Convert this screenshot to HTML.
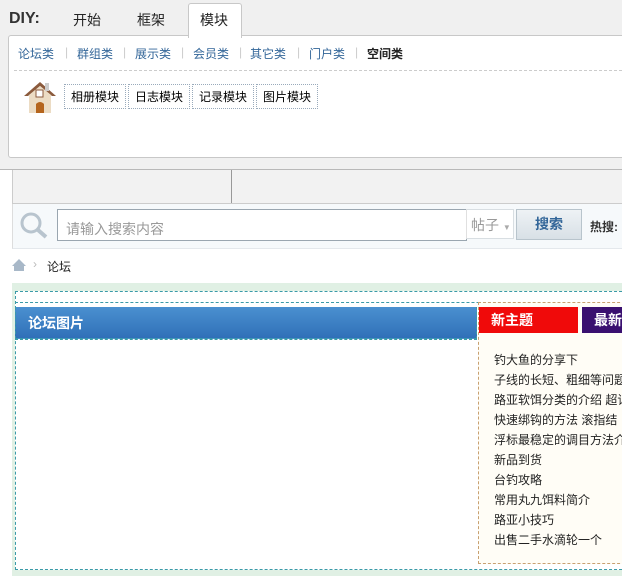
<!DOCTYPE html><html><head><meta charset="utf-8"><style>
body{margin:0;width:622px;height:580px;overflow:hidden;background:#fff;font-family:"Liberation Sans","Noto Sans CJK SC",sans-serif;font-size:12px;position:relative}
.a{position:absolute}
.c{position:absolute;top:45px;color:#336699}
.s{position:absolute;top:45px;color:#ccc}
.m{border:1px dotted #9ab;padding:3px 0;width:60px;text-align:center;display:inline-block}
</style></head><body>
<div class="a" style="left:0;top:0;width:622px;height:169px;background:#f0f0f0;border-bottom:1px solid #b8b8b8"></div>
<div class="a" style="left:9px;top:10px;font:bold 16px 'Liberation Sans',sans-serif;color:#333">DIY:</div>
<div class="a" style="left:73px;top:10px;font-size:14px;color:#222">开始</div>
<div class="a" style="left:137px;top:10px;font-size:14px;color:#222">框架</div>
<div class="a" style="left:188px;top:3px;width:52px;height:34px;background:#fff;border:1px solid #c8c8c8;border-bottom:none;border-radius:3px 3px 0 0;z-index:2"></div>
<div class="a" style="left:200px;top:10px;font-size:14px;color:#222;z-index:3">模块</div>
<div class="a" style="left:8px;top:35px;width:620px;height:121px;background:#fff;border:1px solid #c8c8c8;border-radius:3px"></div>
<span class="c" style="left:18px">论坛类</span><span class="s" style="left:65px">|</span>
<span class="c" style="left:77px">群组类</span><span class="s" style="left:123px">|</span>
<span class="c" style="left:135px">展示类</span><span class="s" style="left:181px">|</span>
<span class="c" style="left:193px">会员类</span><span class="s" style="left:239px">|</span>
<span class="c" style="left:250px">其它类</span><span class="s" style="left:297px">|</span>
<span class="c" style="left:309px">门户类</span><span class="s" style="left:355px">|</span>
<span class="c" style="left:367px;color:#222;font-weight:bold">空间类</span>
<div class="a" style="left:14px;top:70px;width:608px;border-top:1px dashed #ccc"></div>
<svg class="a" style="left:23px;top:80px" width="34" height="34" viewBox="0 0 34 34"><path d="M1 16 L17 2 L33 16 L29 16 L17 6 L5 16Z" fill="#8b5a3c"/><path d="M6 15 L17 6 L28 15 L28 33 L6 33Z" fill="#ecdcc4"/><rect x="22" y="3" width="4" height="8" fill="#ccc"/><rect x="13" y="10" width="7" height="7" fill="#fff" stroke="#8b5a3c"/><path d="M13 33 V24 Q17 20 21 24 V33Z" fill="#b5651d"/></svg>
<div class="a" style="left:64px;top:84px;display:flex;gap:2px">
<span class="m">相册模块</span><span class="m">日志模块</span><span class="m">记录模块</span><span class="m">图片模块</span></div>
<div class="a" style="left:12px;top:170px;width:610px;height:33px;background:#f2f2f2;border-bottom:1px solid #ccc;border-left:1px solid #ccc"></div>
<div class="a" style="left:231px;top:170px;height:33px;border-left:1px solid #999"></div>
<div class="a" style="left:12px;top:204px;width:610px;height:44px;background:#f6f9fb;border-bottom:1px solid #e4e8ec;border-left:1px solid #ddd"></div>
<svg class="a" style="left:18px;top:211px" width="32" height="28"><circle cx="13" cy="12" r="9" fill="none" stroke="#b8c4ce" stroke-width="3"/><path d="M20 19 L28 26" stroke="#b8c4ce" stroke-width="4"/></svg>
<div class="a" style="left:57px;top:209px;width:408px;height:30px;background:#fff;border:1px solid #9aa6b0"></div>
<div class="a" style="left:66px;top:219px;color:#999;font-size:14px">请输入搜索内容</div>
<div class="a" style="left:466px;top:209px;width:48px;height:30px;background:#fff;border:1px solid #d8dee2;border-left-color:#e0e0e0;color:#999;font-size:14px;line-height:30px;padding-left:4px;box-sizing:border-box">帖子 <span style="font-size:8px;color:#aaa">▼</span></div>
<div class="a" style="left:516px;top:209px;width:66px;height:31px;background:linear-gradient(#eef2f5,#d8e0e6);border:1px solid #b8c4cc;box-sizing:border-box;color:#336699;font-weight:bold;font-size:14px;text-align:center;line-height:29px">搜索</div>
<div class="a" style="left:590px;top:218px;font-weight:bold;color:#333">热搜:</div>
<svg class="a" style="left:11px;top:258px" width="16" height="14"><path d="M8 1 L15 8 L13 8 L13 13 L3 13 L3 8 L1 8Z" fill="#a8b8c8"/></svg>
<div class="a" style="left:33px;top:257px;color:#bbb">›</div>
<div class="a" style="left:47px;top:258px;color:#222">论坛</div>
<div class="a" style="left:12px;top:283px;width:610px;height:293px;background:#e0f0e4"></div>
<div class="a" style="left:15px;top:291px;width:620px;height:277px;background:#fff;border:1px dashed #3a9aa8"></div>
<div class="a" style="left:15px;top:302px;width:620px;border-top:1px dashed #3a9aa8"></div>
<div class="a" style="left:15px;top:307px;width:462px;height:32px;background:linear-gradient(#4a90d0,#3070b8);border:1px dashed #3a9aa8;border-top:none;color:#fff;font-weight:bold;font-size:14px;line-height:32px;padding-left:12px;box-sizing:border-box">论坛图片</div>
<div class="a" style="left:15px;top:339px;width:462px;border-top:1px dashed #3a9aa8"></div>
<div class="a" style="left:478px;top:302px;width:150px;height:260px;background:#fffdf6;border:1px dashed #c8a070"></div>
<div class="a" style="left:479px;top:307px;width:99px;height:26px;background:#f00a0a;color:#fff;font-weight:bold;font-size:14px;line-height:26px;padding-left:12px;box-sizing:border-box">新主题</div>
<div class="a" style="left:582px;top:307px;width:50px;height:26px;background:#3a1070;color:#fff;font-weight:bold;font-size:14px;line-height:26px;padding-left:12px;box-sizing:border-box;white-space:nowrap;overflow:hidden">最新</div>
<div class="a" style="left:494px;top:350px;color:#222;line-height:20px;white-space:nowrap">钓大鱼的分享下<br>子线的长短、粗细等问题<br>路亚软饵分类的介绍 超详<br>快速绑钩的方法 滚指结<br>浮标最稳定的调目方法介<br>新品到货<br>台钓攻略<br>常用丸九饵料简介<br>路亚小技巧<br>出售二手水滴轮一个</div>
</body></html>
